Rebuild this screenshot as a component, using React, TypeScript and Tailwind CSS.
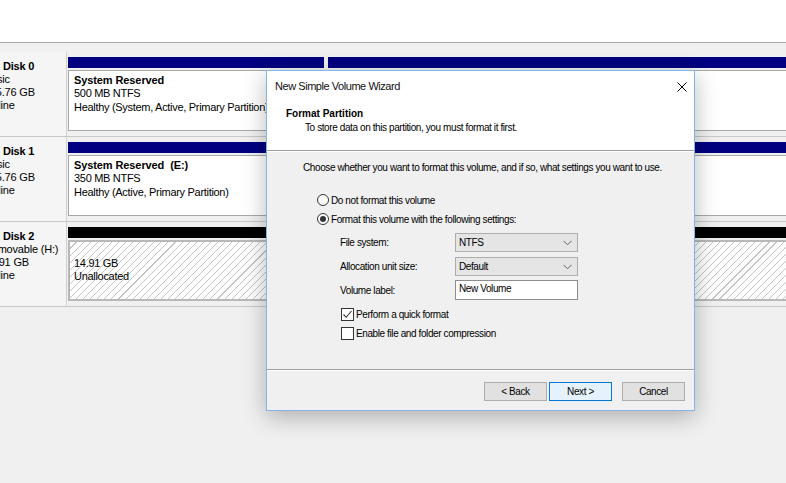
import React from "react";

function Radio({ checked }: { checked?: boolean }) {
  return (
    <span className="w-[12px] h-[12px] rounded-full border border-[#333333] bg-white flex items-center justify-center shrink-0">
      {checked && <span className="w-[6px] h-[6px] rounded-full bg-[#333333]" />}
    </span>
  );
}

function Check({ checked }: { checked?: boolean }) {
  return (
    <span className="w-[13px] h-[13px] border border-[#333333] bg-white flex items-center justify-center shrink-0">
      {checked && (
        <svg width="11" height="11" viewBox="0 0 11 11">
          <polyline points="1.5,5.5 4.2,8.3 9.5,2" fill="none" stroke="#333333" strokeWidth="1.1" />
        </svg>
      )}
    </span>
  );
}

function Chevron() {
  return (
    <svg width="9" height="6" viewBox="0 0 9 6">
      <polyline points="0.5,0.8 4.5,4.8 8.5,0.8" fill="none" stroke="#606060" strokeWidth="1" />
    </svg>
  );
}

function Select({ value }: { value: string }) {
  return (
    <div className="w-[123px] h-[19px] border border-[#adadad] bg-[#e5e5e5] flex items-center justify-between pl-[3px] pr-[5px]">
      <span>{value}</span>
      <Chevron />
    </div>
  );
}

function Button({ label, primary }: { label: string; primary?: boolean }) {
  return (
    <div
      className={
        primary
          ? "w-[63px] h-[19px] border border-[#0078d7] bg-[#e5f1fb] flex items-center justify-center"
          : "w-[63px] h-[19px] border border-[#adadad] bg-[#e1e1e1] flex items-center justify-center"
      }
    >
      {label}
    </div>
  );
}

function DiskLabel({ name, type, size, status }: { name: string; type: string; size: string; status: string }) {
  return (
    <div className="w-[67px] shrink-0 border-r border-[#d2d2d2] overflow-hidden pt-[8px] bg-[#f5f5f5]">
      <div className="ml-[-16px] whitespace-nowrap text-[11px] leading-[13px] tracking-[-0.2px]">
        <div className="pl-[19px] font-bold">{name}</div>
        <div>{type}</div>
        <div>{size}</div>
        <div>{status}</div>
      </div>
    </div>
  );
}

function PartText({ lines, bold }: { lines: string[]; bold?: string }) {
  return (
    <div className="pl-[5px] pt-[3px] whitespace-pre text-[11px] leading-[13.3px] tracking-[-0.3px]">
      {bold && <div className="font-bold tracking-[-0.1px]">{bold}</div>}
      {lines.map((l) => (
        <div key={l}>{l}</div>
      ))}
    </div>
  );
}

export default function App() {
  return (
    <div className="relative w-[786px] h-[483px] overflow-hidden bg-[#f0f0f0] text-black font-['Liberation_Sans',Arial,sans-serif]">
      <div className="h-[43px] bg-white border-b border-[#a8a8a8]" />
      <div className="h-[9px]" />

      {/* Disk 0 */}
      <div className="flex h-[85px] border-b border-[#c8c8c8]">
        <DiskLabel name="Disk 0" type="Basic" size="465.76 GB" status="Online" />
        <div className="flex-1 flex flex-col pl-[1px] pt-[5px]">
          <div className="flex gap-[4px] h-[11px]">
            <div className="w-[256px] bg-[#000080]" />
            <div className="flex-1 bg-[#000080]" />
          </div>
          <div className="flex gap-[4px] mt-[2px] h-[61px]">
            <div className="w-[256px] bg-white border border-[#a8a8a8]">
              <PartText bold="System Reserved" lines={["500 MB NTFS", "Healthy (System, Active, Primary Partition)"]} />
            </div>
            <div className="flex-1 bg-white border border-[#a8a8a8] border-r-0" />
          </div>
        </div>
      </div>

      {/* Disk 1 */}
      <div className="flex h-[85px] border-b border-[#c8c8c8]">
        <DiskLabel name="Disk 1" type="Basic" size="465.76 GB" status="Online" />
        <div className="flex-1 flex flex-col pl-[1px] pt-[5px]">
          <div className="flex gap-[4px] h-[11px]">
            <div className="w-[256px] bg-[#000080]" />
            <div className="flex-1 bg-[#000080]" />
          </div>
          <div className="flex gap-[4px] mt-[2px] h-[61px]">
            <div className="w-[256px] bg-white border border-[#a8a8a8]">
              <PartText bold="System Reserved  (E:)" lines={["350 MB NTFS", "Healthy (Active, Primary Partition)"]} />
            </div>
            <div className="flex-1 bg-white border border-[#a8a8a8] border-r-0" />
          </div>
        </div>
      </div>

      {/* Disk 2 */}
      <div className="flex h-[85px] border-b border-[#c8c8c8]">
        <DiskLabel name="Disk 2" type="Removable (H:)" size="14.91 GB" status="Online" />
        <div className="flex-1 flex flex-col pl-[1px] pt-[5px]">
          <div className="h-[11px] bg-black" />
          <div className="mt-[2px] h-[61px] border-2 border-[#b8b8b8] border-r-0 bg-[image:repeating-linear-gradient(135deg,#ffffff_0px,#ffffff_4.2px,#c4c4c4_4.2px,#c4c4c4_5px)]">
            <div className="pl-[4px] pt-[15px] whitespace-nowrap text-[11px] leading-[13.3px] tracking-[-0.3px]">
              <div>14.91 GB</div>
              <div>Unallocated</div>
            </div>
          </div>
        </div>
      </div>

      {/* Wizard dialog */}
      <div className="absolute left-[266px] top-[70px] w-[429px] h-[341px] flex flex-col border border-[#84b4e4] bg-[#f0f0f0] shadow-[0_6px_22px_rgba(0,0,0,0.28)] text-[10px] leading-[13px] tracking-[-0.4px] font-['Liberation_Sans',sans-serif]">
        <div className="h-[80px] shrink-0 bg-white border-b border-[#a0a0a0]">
          <div className="h-[31px] flex items-center justify-between pl-[8px] pr-[7px]">
            <span className="text-[11px] tracking-[-0.45px] text-[#111111]">New Simple Volume Wizard</span>
            <svg width="10" height="10" viewBox="0 0 10 10">
              <line x1="0.5" y1="0.5" x2="9.5" y2="9.5" stroke="#000000" strokeWidth="1" />
              <line x1="9.5" y1="0.5" x2="0.5" y2="9.5" stroke="#000000" strokeWidth="1" />
            </svg>
          </div>
          <div className="mt-[5px] pl-[19px] leading-[14px] font-bold tracking-[0px]">Format Partition</div>
          <div className="pl-[38px] leading-[14px]">To store data on this partition, you must format it first.</div>
        </div>

        <div className="flex-1 flex flex-col border-t border-white">
          <div className="pl-[36px] pt-[9px] whitespace-nowrap">
            Choose whether you want to format this volume, and if so, what settings you want to use.
          </div>
          <div className="mt-[18px] h-[16px] pl-[50px] flex items-center gap-[2px]">
            <Radio />
            <span>Do not format this volume</span>
          </div>
          <div className="mt-[3px] h-[16px] pl-[50px] flex items-center gap-[2px]">
            <Radio checked />
            <span>Format this volume with the following settings:</span>
          </div>
          <div className="mt-[6px] pl-[73px] flex items-center">
            <span className="w-[115px]">File system:</span>
            <Select value="NTFS" />
          </div>
          <div className="mt-[5px] pl-[73px] flex items-center">
            <span className="w-[115px]">Allocation unit size:</span>
            <Select value="Default" />
          </div>
          <div className="mt-[4px] pl-[73px] flex items-center">
            <span className="w-[115px]">Volume label:</span>
            <div className="w-[123px] h-[20px] border border-[#8c8c8c] bg-white pl-[3px] pt-[1px]">New Volume</div>
          </div>
          <div className="mt-[8px] h-[13px] pl-[74px] flex items-center gap-[2px]">
            <Check checked />
            <span>Perform a quick format</span>
          </div>
          <div className="mt-[6px] h-[13px] pl-[74px] flex items-center gap-[2px]">
            <Check />
            <span>Enable file and folder compression</span>
          </div>
        </div>

        <div className="h-[41px] shrink-0 border-t border-[#a0a0a0]">
          <div className="h-full border-t border-white flex justify-end items-start pt-[11px] pr-[9px]">
            <Button label="< Back" />
            <div className="w-[2px]" />
            <Button label="Next >" primary />
            <div className="w-[10px]" />
            <Button label="Cancel" />
          </div>
        </div>
      </div>
    </div>
  );
}
